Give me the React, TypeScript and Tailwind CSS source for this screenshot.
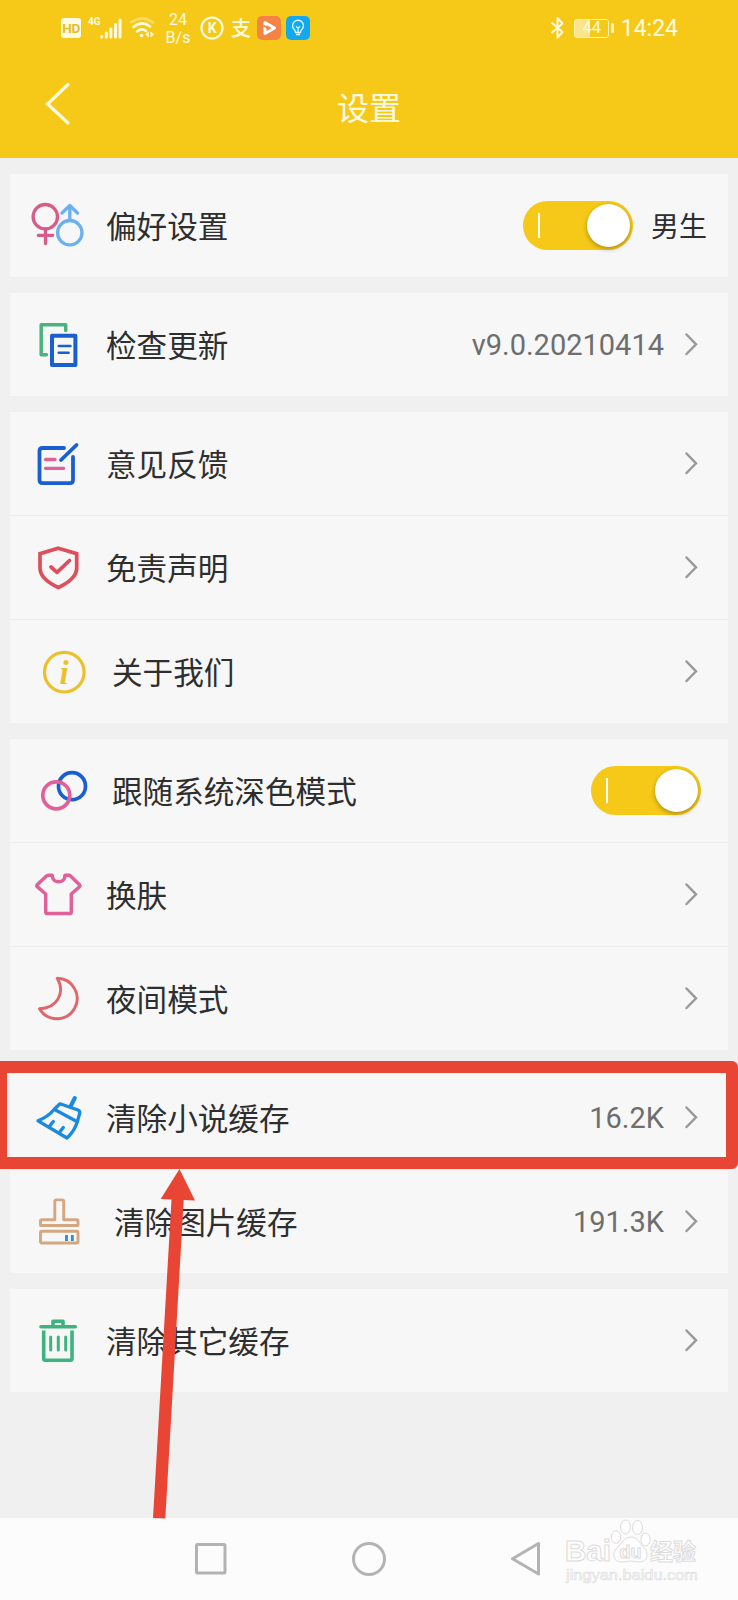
import type { ReactNode } from "react";

type RowProps = {
  icon: ReactNode;
  label: string;
  labelClass?: string;
  children?: ReactNode;
};

const BLUE = "#1a5fd0";
const PINK = "#e0609a";

function App() {
  return (
    <div className="relative flex h-[1600px] w-[738px] flex-col overflow-hidden bg-[#f0f0f0] font-['Roboto','Noto_Sans_CJK_SC',sans-serif] text-[#2e2e2e]">
      <header className="h-[158px] shrink-0 bg-[#f6c918] text-[#fffbe2]">
        <StatusBar />
        <div className="grid h-[96px] grid-cols-3 items-center">
          <svg className="ml-[44px]" width="28" height="44" fill="none" stroke="currentColor" strokeWidth="3.2" strokeLinecap="round">
            <path d="M24 2.5 L3.5 22 L24 41" />
          </svg>
          <h1 className="pt-[9px] text-center text-[32px] leading-[40px]">设置</h1>
        </div>
      </header>

      <main className="flex grow flex-col gap-4 px-[10px] pt-4">
        <Card>
          <Row icon={<GenderIcon />} label="偏好设置">
            <Toggle />
            <span className="mr-[21px] ml-[18px] pt-[4px] text-[28px]">男生</span>
          </Row>
        </Card>

        <Card>
          <Row icon={<UpdateIcon />} label="检查更新">
            <Value text="v9.0.20210414" />
            <Chevron />
          </Row>
        </Card>

        <Card>
          <Row icon={<FeedbackIcon />} label="意见反馈">
            <Chevron />
          </Row>
          <Row icon={<ShieldIcon />} label="免责声明">
            <Chevron />
          </Row>
          <Row icon={<InfoIcon />} label="关于我们" labelClass="pl-[6px]">
            <Chevron />
          </Row>
        </Card>

        <Card>
          <Row icon={<CirclesIcon />} label="跟随系统深色模式" labelClass="pl-[6px]">
            <div className="mr-[27px]">
              <Toggle />
            </div>
          </Row>
          <Row icon={<ShirtIcon />} label="换肤">
            <Chevron />
          </Row>
          <Row icon={<MoonIcon />} label="夜间模式">
            <Chevron />
          </Row>
        </Card>

        <Card>
          <Row icon={<BroomIcon />} label="清除小说缓存">
            <Value text="16.2K" />
            <Chevron />
          </Row>
          <Row icon={<StampIcon />} label="清除图片缓存" labelClass="pl-[8px]">
            <Value text="191.3K" />
            <Chevron />
          </Row>
        </Card>

        <Card>
          <Row icon={<TrashIcon />} label="清除其它缓存">
            <Chevron />
          </Row>
        </Card>
      </main>

      <NavBar />

      {/* Highlight box and arrow */}
      <div className="absolute top-[1060.5px] left-[-5px] h-[108px] w-[743px] rounded-md border-[12px] border-[#e84535]" />
      <svg className="absolute top-[1168px] left-[150px]" width="50" height="352" fill="#e84535">
        <path d="M29.5 1 L45 32.5 L33.7 32 L15.3 350.5 L3 350 L21.5 31.5 L10.7 31 Z" />
      </svg>
      <Watermark />
    </div>
  );
}

function StatusBar() {
  return (
    <div className="flex h-[56px] items-center pl-[61px]">
      <div className="flex h-5 w-5 items-center justify-center rounded-[3px] bg-[#fffbe2] text-[13.5px] font-bold tracking-[-0.5px] text-[#e3bd2a]">
        HD
      </div>
      <span className="mb-[13px] ml-[7px] w-3 text-[10px] leading-none font-bold">4G</span>
      <svg width="22" height="22" fill="none" stroke="currentColor" strokeWidth="3" strokeLinecap="round">
        <path d="M1.7 19.5v0.5M6.3 16v4M10.9 12v8M15.5 7.5v12.5M20 3v17" />
      </svg>
      <svg className="ml-[7px]" width="26" height="22" fill="none" stroke="currentColor" strokeWidth="2.6" strokeLinecap="round">
        <path d="M2 5.5Q13 -2.5 24 5.5" opacity="0.4" />
        <path d="M4.5 10Q13 3 21 9.5M8 14.5Q12.5 10.5 17 14" />
        <circle cx="12.5" cy="18.5" r="1.8" fill="currentColor" stroke="none" />
        <path d="M19.8 14.5v6l-3.5-3zM21.5 14.5v6l3.5-3z" fill="currentColor" stroke="none" />
      </svg>
      <div className="ml-[8px] w-[30px] pt-[1px] text-center text-[16px] leading-[18px]">
        24
        <br />
        B/s
      </div>
      <svg className="ml-[7px]" width="24" height="24" fill="none" stroke="currentColor" strokeWidth="2.2">
        <circle cx="12" cy="12" r="10.5" />
        <text x="12.3" y="17" textAnchor="middle" fontSize="14" fontWeight="700" fill="currentColor" stroke="none">
          K
        </text>
      </svg>
      <span className="ml-[7px] w-[21px] pt-[1px] text-[20px] leading-none font-medium">支</span>
      <svg className="ml-[5px]" width="24" height="24">
        <rect width="24" height="24" rx="5" fill="#f58345" />
        <path d="M8 6.5l9.5 5.5L8 17.5z" fill="none" stroke="#fff" strokeWidth="3" strokeLinejoin="round" />
        <path d="M6.5 9.5l5 3" stroke="#f58345" strokeWidth="1.5" />
      </svg>
      <svg className="ml-[5px]" width="24" height="24" fill="none" stroke="#e8faff" strokeWidth="1.3">
        <rect width="24" height="24" rx="5" fill="#12a9ef" stroke="none" />
        <path d="M9.5 16.5q0-2-1.5-3.2a5.4 5.4 0 1 1 8 0q-1.5 1.2-1.5 3.2zM10 18.5h4M12 16v-4l-2-1.5M12 12l2-1.5" />
      </svg>

      <svg className="ml-auto" width="15" height="24" fill="none" stroke="currentColor" strokeWidth="2" strokeLinejoin="round">
        <path d="M1.5 6.5L12.5 16L7.5 21.5V2L12.5 7.5L1.5 17" />
      </svg>
      <div className="ml-[9px] flex h-[19px] w-[35px] items-center justify-center rounded-[3px] border-[1.5px] border-[#fff3b8] bg-linear-to-r from-[#fbe48a] from-45% to-transparent to-45% text-[16.5px] leading-none">
        44
      </div>
      <div className="ml-[2px] h-[10px] w-[2.5px] rounded-sm bg-[#fff3b8]" />
      <span className="mr-[60px] ml-[7px] text-[23px] leading-none">14:24</span>
    </div>
  );
}

function Card({ children }: { children: ReactNode }) {
  return <section className="divide-y divide-[#ececec] bg-[#f7f7f7]">{children}</section>;
}

function Row({ icon, label, labelClass = "", children }: RowProps) {
  return (
    <div className="box-content flex h-[103px] items-center pl-[14px]">
      {icon}
      <span className={`ml-[10px] pt-[4px] text-[30.6px] leading-[40px] ${labelClass}`}>{label}</span>
      <div className="ml-auto flex items-center">{children}</div>
    </div>
  );
}

function Value({ text }: { text: string }) {
  return <span className="mr-[20px] pt-[1px] text-[29px] leading-[40px] text-[#6e6e6e]">{text}</span>;
}

function Chevron() {
  return (
    <svg className="mr-[30px]" width="14" height="25" fill="none" stroke="#9a9a9a" strokeWidth="2.5" strokeLinecap="round">
      <path d="M2.5 2.5L12 12.3L2.5 22" />
    </svg>
  );
}

function Toggle() {
  return (
    <div className="flex h-[49px] w-[110px] items-center justify-between rounded-full bg-[#f6c918] pr-[3px] pl-[15px]">
      <div className="h-[25px] w-[2px] bg-white" />
      <div className="h-[43px] w-[43px] rounded-full bg-white shadow-[0_2px_5px_rgba(0,0,0,0.3)]" />
    </div>
  );
}

function Icon({ children, width = 3.5 }: { children: ReactNode; width?: number }) {
  return (
    <svg width="72" height="61" fill="none" strokeWidth={width} strokeLinecap="round" strokeLinejoin="round">
      {children}
    </svg>
  );
}

function GenderIcon() {
  return (
    <Icon width={3.3}>
      <g stroke="#d75c89">
        <circle cx="21.3" cy="21.7" r="12.2" />
        <path d="M21.5 34V48.5M14.3 40.3H28.7" />
      </g>
      <g stroke="#6bb1ef">
        <circle cx="45.8" cy="37.7" r="12.2" />
        <path d="M45.8 25.5V11M38 18L45.8 10.5L53.5 18" />
      </g>
    </Icon>
  );
}

function UpdateIcon() {
  return (
    <Icon width={3.5}>
      <path d="M22.5 40.7H17.2V10.8H41.7V16.5" stroke="#4bb27e" />
      <rect x="28" y="21.7" width="23.4" height="29.2" stroke={BLUE} strokeWidth="4" />
      <path d="M34.7 32H46.5M34.7 38.7H44.7" stroke={BLUE} strokeWidth="2.4" />
    </Icon>
  );
}

function FeedbackIcon() {
  return (
    <Icon width={3.8}>
      <path d="M40 15H18.5Q15.5 15 15.5 18V47Q15.5 50.2 18.5 50.2H46Q49 50.2 49 47V24" stroke={BLUE} />
      <path d="M37 27L52.5 12" stroke={BLUE} />
      <path d="M21.5 26.5H31M21.5 35.3H39.7" stroke={PINK} strokeWidth="3.3" />
    </Icon>
  );
}

function ShieldIcon() {
  return (
    <Icon width={3.7}>
      <g stroke="#dd4f5a">
        <path d="M34.3 11.2L52.7 16.7V31Q52.7 42 34.3 50.5Q16 42 16 31V16.7Z" strokeLinejoin="miter" />
        <path d="M27 30L33 35.3L45.5 23.5" />
      </g>
    </Icon>
  );
}

function InfoIcon() {
  return (
    <Icon width={3.2}>
      <circle cx="40.3" cy="31.2" r="19.8" stroke="#ecc02b" />
      <text x="40.2" y="42.5" textAnchor="middle" fontSize="33" fontWeight="700" fontStyle="italic" fontFamily="Liberation Serif, serif" fill="#ecc02b">
        i
      </text>
    </Icon>
  );
}

function CirclesIcon() {
  return (
    <Icon width={3.7}>
      <circle cx="48" cy="26.2" r="13.5" stroke={BLUE} />
      <circle cx="32.3" cy="35.3" r="13.5" stroke={PINK} />
    </Icon>
  );
}

function ShirtIcon() {
  return (
    <Icon width={3.5}>
      <path
        d="M24.5 11.2H28.2C28.2 20 41 20 41 11.2H44.8Q45.8 11.2 46.5 12L55.5 20.7Q56.3 21.7 55.5 22.7L47.3 30V47.7Q47.3 49.6 45.3 49.6H23.7Q21.7 49.6 21.7 47.7V30L13.2 22.7Q12.4 21.7 13.2 20.7L22.5 12Q23.5 11.2 24.5 11.2Z"
        stroke={PINK}
      />
    </Icon>
  );
}

function MoonIcon() {
  return (
    <Icon width={2.9}>
      <path d="M33.3 10.3A20.2 20.2 0 1 1 15.5 40.7C32 40.5 42 26 33.3 10.3Z" stroke="#e0666a" />
    </Icon>
  );
}

function BroomIcon() {
  return (
    <Icon width={3.3}>
      <g stroke="#1a8ae0">
        <path d="M50.8 11L46.5 19.5" strokeWidth="4" />
        <path d="M36 16.8L54 23Q56.5 24 55.5 27L53.3 34.7Q50.5 44 43 51L14 33.8Q24 30 30.3 22.3Z" />
        <path d="M31 22.8L53.3 34.7" />
        <path d="M29.3 34.5L25.5 39.3M39.3 40.5L35.5 45.3" />
      </g>
    </Icon>
  );
}

function StampIcon() {
  return (
    <Icon width={2.9}>
      <g stroke="#d3a77f">
        <path d="M30.8 28.7V10.5Q30.8 8.9 32.5 8.9H38Q39.7 8.9 39.7 10.5V28.7H52.5Q54 28.7 54 30V34.5H16.5V30Q16.5 28.7 18 28.7Z" />
        <rect x="16.5" y="40.2" width="37.5" height="11.8" rx="1" />
      </g>
      <path d="M42.5 44V50M48.3 44V50" stroke="#3a8fc0" strokeLinecap="butt" />
    </Icon>
  );
}

function TrashIcon() {
  return (
    <Icon width={3.6}>
      <g stroke="#3fb37f">
        <path d="M17 16.7H51.3M29 16V11.3H39V16" />
        <path d="M19.7 20.5V48.5Q19.7 50.2 21.5 50.2H46.3Q48 50.2 48 48.5V20.5" strokeLinecap="butt" />
        <path d="M26.7 27V40M34.3 27V40M41.7 27V40" strokeWidth="3" />
      </g>
    </Icon>
  );
}

function NavBar() {
  return (
    <nav className="flex h-[82px] shrink-0 items-center bg-[#fcfcfc] pl-[194px]">
      <svg width="348" height="36" fill="none" stroke="#b3b3b3" strokeWidth="3" strokeLinejoin="round">
        <rect x="2.5" y="3.5" width="28.5" height="28.5" rx="1" />
        <circle cx="175" cy="18" r="15.5" />
        <path d="M344.5 2.5V33L318.5 17.8Z" />
      </svg>
    </nav>
  );
}

function Watermark() {
  return (
    <svg className="absolute top-[1516px] left-[562px]" width="142" height="74" fill="#fefefe" stroke="#dcdcdc" strokeWidth="1" fontFamily="Liberation Sans, Noto Sans CJK SC, sans-serif">
      <text x="3" y="44.5" fontSize="29" fontWeight="700" textLength="46" lengthAdjust="spacingAndGlyphs">
        Bai
      </text>
      <ellipse cx="54" cy="21" rx="4.7" ry="6.3" />
      <ellipse cx="63.5" cy="11" rx="5" ry="7" />
      <ellipse cx="75.5" cy="11.5" rx="5" ry="7" />
      <ellipse cx="83.5" cy="23.5" rx="4.7" ry="6.3" />
      <path d="M69 21C76 21 77 27 82 32C87 37 86 46 77 46Q68 44 60 46C50 46 50 37 55 32C60 27 62 21 69 21Z" />
      <text x="68.5" y="42" fontSize="18" fontWeight="700" textAnchor="middle">
        du
      </text>
      <text x="88" y="44" fontSize="23" fontWeight="700" textLength="46">
        经验
      </text>
      <text x="4" y="64" fontSize="14.5" textLength="132" lengthAdjust="spacingAndGlyphs" strokeWidth="0.6">
        jingyan.baidu.com
      </text>
    </svg>
  );
}

export default App;
